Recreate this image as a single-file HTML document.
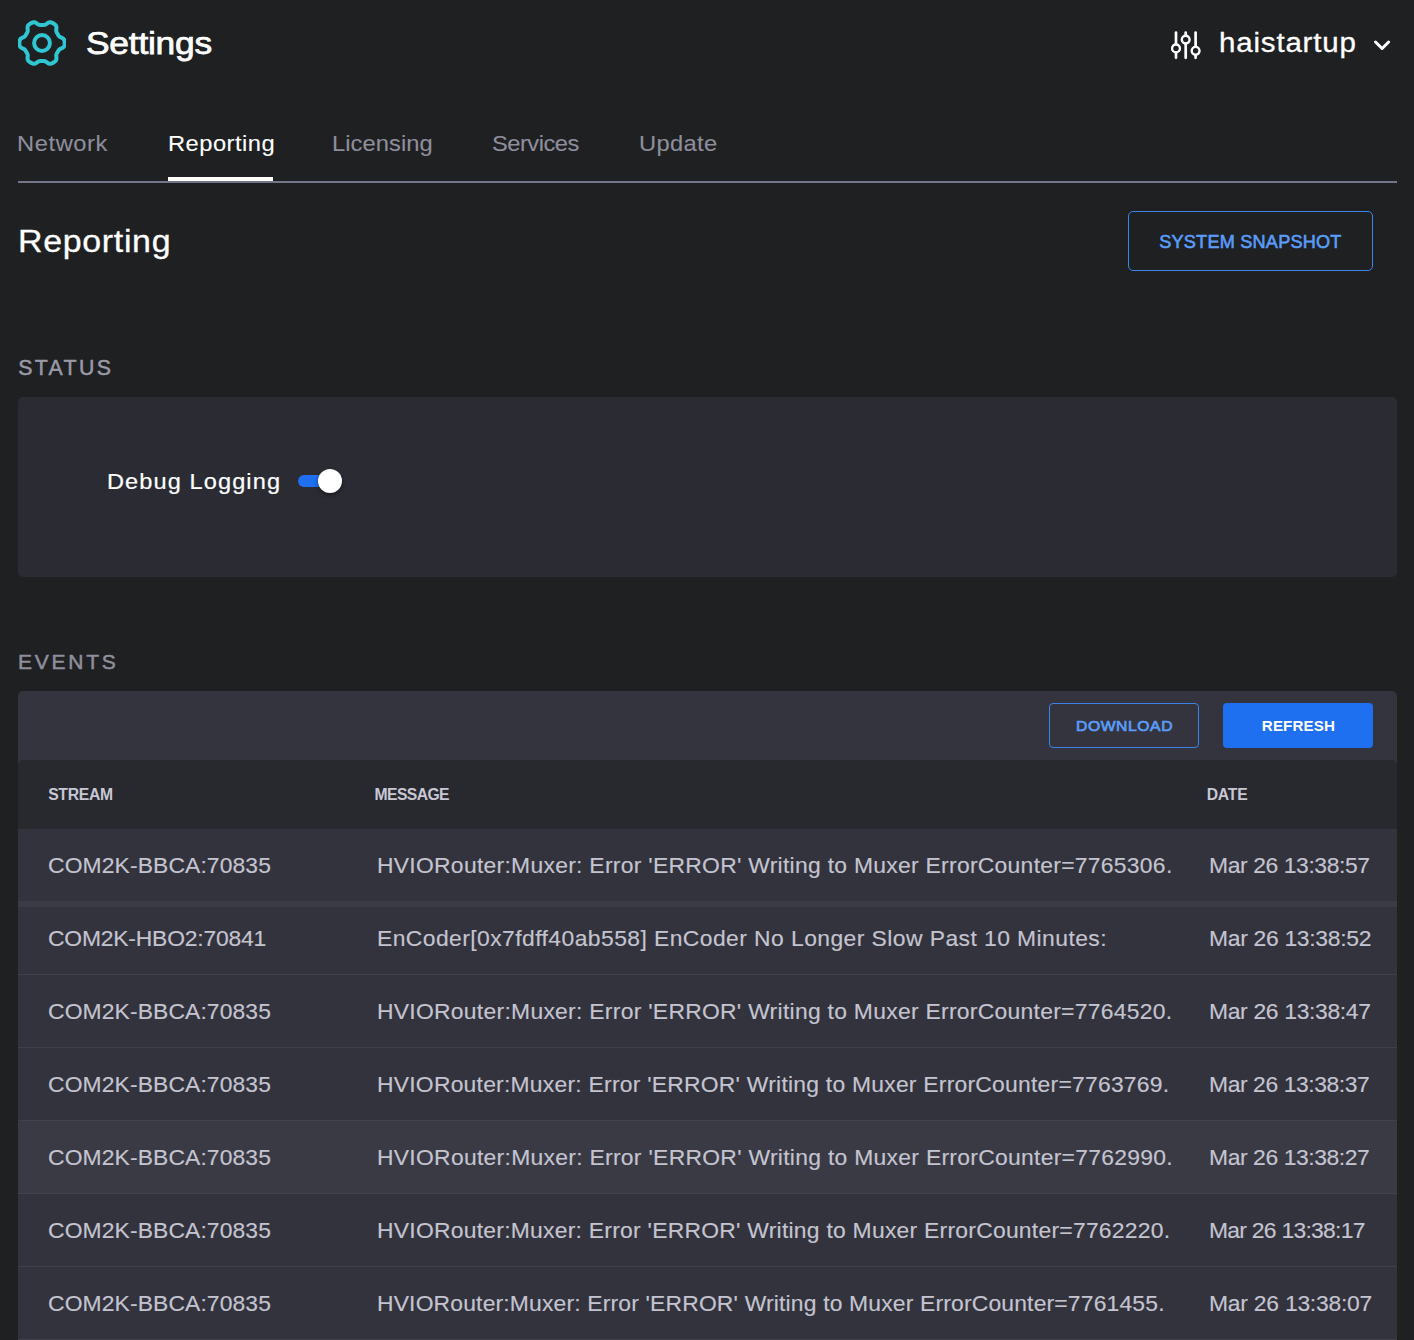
<!DOCTYPE html>
<html><head><meta charset="utf-8"><style>
html,body{margin:0;padding:0;}
body{width:1414px;height:1340px;overflow:hidden;background:#1f2022;position:relative;font-family:"Liberation Sans",sans-serif;}
.t{position:absolute;white-space:nowrap;line-height:1;transform-origin:0 0;}
.b{position:absolute;}
</style></head><body>
<svg class="b" style="left:18px;top:19px" width="48" height="48" viewBox="0 0 48 48"><path d="M46.65,24.00 L46.64,24.59 L46.59,25.18 L46.51,25.77 L46.39,26.35 L46.21,26.92 L45.95,27.48 L45.58,28.00 L45.06,28.48 L44.41,28.90 L43.66,29.27 L42.90,29.60 L42.23,29.92 L41.68,30.26 L41.25,30.62 L40.91,31.00 L40.61,31.40 L40.35,31.80 L40.11,32.21 L39.87,32.62 L39.63,33.02 L39.40,33.43 L39.16,33.85 L38.93,34.26 L38.71,34.69 L38.52,35.14 L38.36,35.63 L38.26,36.18 L38.24,36.82 L38.30,37.57 L38.39,38.39 L38.45,39.22 L38.41,40.00 L38.25,40.69 L37.98,41.27 L37.64,41.77 L37.23,42.21 L36.79,42.61 L36.32,42.97 L35.83,43.31 L35.33,43.62 L34.80,43.90 L34.27,44.16 L33.72,44.38 L33.16,44.57 L32.57,44.70 L31.96,44.75 L31.32,44.68 L30.65,44.48 L29.96,44.12 L29.27,43.66 L28.60,43.17 L27.98,42.75 L27.42,42.44 L26.89,42.25 L26.39,42.14 L25.90,42.09 L25.42,42.06 L24.95,42.05 L24.47,42.05 L24.00,42.05 L23.53,42.05 L23.05,42.05 L22.58,42.06 L22.10,42.09 L21.61,42.14 L21.11,42.25 L20.58,42.44 L20.02,42.75 L19.40,43.17 L18.73,43.66 L18.04,44.12 L17.35,44.48 L16.68,44.68 L16.04,44.75 L15.43,44.70 L14.84,44.57 L14.28,44.38 L13.73,44.16 L13.20,43.90 L12.68,43.62 L12.17,43.31 L11.68,42.97 L11.21,42.61 L10.77,42.21 L10.36,41.77 L10.02,41.27 L9.75,40.69 L9.59,40.00 L9.55,39.22 L9.61,38.39 L9.70,37.57 L9.76,36.82 L9.74,36.18 L9.64,35.63 L9.48,35.14 L9.29,34.69 L9.07,34.26 L8.84,33.85 L8.60,33.43 L8.37,33.02 L8.13,32.62 L7.89,32.21 L7.65,31.80 L7.39,31.40 L7.09,31.00 L6.75,30.62 L6.32,30.26 L5.77,29.92 L5.10,29.60 L4.34,29.27 L3.59,28.90 L2.94,28.48 L2.42,28.00 L2.05,27.48 L1.79,26.92 L1.61,26.35 L1.49,25.77 L1.41,25.18 L1.36,24.59 L1.35,24.00 L1.36,23.41 L1.41,22.82 L1.49,22.23 L1.61,21.65 L1.79,21.08 L2.05,20.52 L2.42,20.00 L2.94,19.52 L3.59,19.10 L4.34,18.73 L5.10,18.40 L5.77,18.08 L6.32,17.74 L6.75,17.38 L7.09,17.00 L7.39,16.60 L7.65,16.20 L7.89,15.79 L8.13,15.38 L8.37,14.98 L8.60,14.57 L8.84,14.15 L9.07,13.74 L9.29,13.31 L9.48,12.86 L9.64,12.37 L9.74,11.82 L9.76,11.18 L9.70,10.43 L9.61,9.61 L9.55,8.78 L9.59,8.00 L9.75,7.31 L10.02,6.73 L10.36,6.23 L10.77,5.79 L11.21,5.39 L11.68,5.03 L12.17,4.69 L12.67,4.38 L13.20,4.10 L13.73,3.84 L14.28,3.62 L14.84,3.43 L15.43,3.30 L16.04,3.25 L16.68,3.32 L17.35,3.52 L18.04,3.88 L18.73,4.34 L19.40,4.83 L20.02,5.25 L20.58,5.56 L21.11,5.75 L21.61,5.86 L22.10,5.91 L22.58,5.94 L23.05,5.95 L23.53,5.95 L24.00,5.95 L24.47,5.95 L24.95,5.95 L25.42,5.94 L25.90,5.91 L26.39,5.86 L26.89,5.75 L27.42,5.56 L27.98,5.25 L28.60,4.83 L29.27,4.34 L29.96,3.88 L30.65,3.52 L31.32,3.32 L31.96,3.25 L32.57,3.30 L33.16,3.43 L33.72,3.62 L34.27,3.84 L34.80,4.10 L35.33,4.38 L35.83,4.69 L36.32,5.03 L36.79,5.39 L37.23,5.79 L37.64,6.23 L37.98,6.73 L38.25,7.31 L38.41,8.00 L38.45,8.78 L38.39,9.61 L38.30,10.43 L38.24,11.18 L38.26,11.82 L38.36,12.37 L38.52,12.86 L38.71,13.31 L38.93,13.74 L39.16,14.15 L39.40,14.57 L39.63,14.98 L39.87,15.38 L40.11,15.79 L40.35,16.20 L40.61,16.60 L40.91,17.00 L41.25,17.38 L41.68,17.74 L42.23,18.08 L42.90,18.40 L43.66,18.73 L44.41,19.10 L45.06,19.52 L45.58,20.00 L45.95,20.52 L46.21,21.08 L46.39,21.65 L46.51,22.23 L46.59,22.82 L46.64,23.41 L46.65,24.00Z" fill="none" stroke="#30c6d2" stroke-width="4" stroke-linejoin="round"/><circle cx="24" cy="24" r="7.9" fill="none" stroke="#30c6d2" stroke-width="4"/></svg>
<svg class="b" style="left:1168px;top:29px" width="36" height="32" viewBox="0 0 36 32">
 <g stroke="#ffffff" stroke-width="2.7" fill="none" stroke-linecap="round">
  <line x1="8" y1="3.5" x2="8" y2="14.5"/><line x1="8" y1="24" x2="8" y2="28.8"/><circle cx="8" cy="19.4" r="3.9" stroke-width="2.4"/>
  <line x1="17.7" y1="3.5" x2="17.7" y2="6"/><line x1="17.7" y1="15" x2="17.7" y2="28.8"/><circle cx="17.7" cy="10.6" r="3.9" stroke-width="2.4"/>
  <line x1="27.6" y1="3.5" x2="27.6" y2="17"/><line x1="27.6" y1="26.5" x2="27.6" y2="28.8"/><circle cx="27.6" cy="21.8" r="3.9" stroke-width="2.4"/>
 </g></svg>
<svg class="b" style="left:1372px;top:38px" width="20" height="16" viewBox="0 0 20 16"><path d="M3.5,4 L10.1,10.5 L16.6,4" fill="none" stroke="#ffffff" stroke-width="3" stroke-linecap="round" stroke-linejoin="round"/></svg>
<div class="b" style="left:18px;top:181px;width:1379px;height:2px;background:#72748a"></div>
<div class="b" style="left:168px;top:177px;width:105px;height:4px;background:#ffffff"></div>
<div class="b" style="left:1128px;top:211px;width:245px;height:60px;box-sizing:border-box;border:1.5px solid #3c84ea;border-radius:5px"></div>
<div class="b" style="left:18px;top:397px;width:1379px;height:180px;background:#2b2b33;border-radius:5px"></div>
<div class="b" style="left:298px;top:475px;width:40px;height:12px;background:#1f6ff0;border-radius:6px"></div>
<div class="b" style="left:318px;top:469px;width:24px;height:24px;background:#ffffff;border-radius:50%;box-shadow:0 2px 4px rgba(0,0,0,0.45)"></div>
<div class="b" style="left:18px;top:691px;width:1379px;height:660px;background:#34343e;border-radius:5px 5px 0 0"></div>
<div class="b" style="left:1049px;top:703px;width:150px;height:45px;box-sizing:border-box;border:1.2px solid #3b82e8;border-radius:4px"></div>
<div class="b" style="left:1223px;top:703px;width:150px;height:45px;background:#1f70f0;border-radius:4px"></div>
<div class="b" style="left:18px;top:760px;width:1379px;height:69px;background:#28282f;border-radius:5px 5px 0 0"></div>
<div class="b" style="left:18px;top:829px;width:1379px;height:511px;background:#33333d"></div>
<div class="b" style="left:18px;top:901px;width:1379px;height:6px;background:#3b3b46"></div>
<div class="b" style="left:18px;top:974px;width:1379px;height:1px;background:#3f3f4a"></div>
<div class="b" style="left:18px;top:1047px;width:1379px;height:1px;background:#3f3f4a"></div>
<div class="b" style="left:18px;top:1120px;width:1379px;height:73px;background:#3a3a45"></div>
<div class="b" style="left:18px;top:1120px;width:1379px;height:1px;background:#42424d"></div>
<div class="b" style="left:18px;top:1193px;width:1379px;height:1px;background:#42424d"></div>
<div class="b" style="left:18px;top:1266px;width:1379px;height:1px;background:#3f3f4a"></div>
<div class="b" style="left:18px;top:1339px;width:1379px;height:1px;background:#3f3f4a"></div>
<div class="t" style="left:85.71px;top:27.00px;font-size:32.21px;letter-spacing:-0.240px;transform:scaleX(1.100);font-weight:normal;color:#ffffff;-webkit-text-stroke:0.75px #ffffff;">Settings</div>
<div class="t" style="left:1219.12px;top:30.00px;font-size:26.80px;letter-spacing:0.752px;transform:scaleX(1.100);font-weight:normal;color:#ffffff;-webkit-text-stroke:0.3px #ffffff;">haistartup</div>
<div class="t" style="left:17.10px;top:133.00px;font-size:21.57px;letter-spacing:0.523px;transform:scaleX(1.100);font-weight:normal;color:#8e8e9c;-webkit-text-stroke:0.1px #8e8e9c;">Network</div>
<div class="t" style="left:167.60px;top:133.00px;font-size:21.57px;letter-spacing:0.431px;transform:scaleX(1.100);font-weight:normal;color:#ffffff;-webkit-text-stroke:0.1px #ffffff;">Reporting</div>
<div class="t" style="left:332.10px;top:133.00px;font-size:21.57px;letter-spacing:0.059px;transform:scaleX(1.100);font-weight:normal;color:#8e8e9c;-webkit-text-stroke:0.1px #8e8e9c;">Licensing</div>
<div class="t" style="left:492.31px;top:133.00px;font-size:21.57px;letter-spacing:-0.469px;transform:scaleX(1.100);font-weight:normal;color:#8e8e9c;-webkit-text-stroke:0.1px #8e8e9c;">Services</div>
<div class="t" style="left:638.97px;top:133.00px;font-size:21.57px;letter-spacing:0.313px;transform:scaleX(1.100);font-weight:normal;color:#8e8e9c;-webkit-text-stroke:0.1px #8e8e9c;">Update</div>
<div class="t" style="left:18.31px;top:227.00px;font-size:30.86px;letter-spacing:0.608px;transform:scaleX(1.100);font-weight:normal;color:#ffffff;-webkit-text-stroke:0.3px #ffffff;">Reporting</div>
<div class="t" style="left:1159.23px;top:233.00px;font-size:18.14px;letter-spacing:0.209px;font-weight:normal;color:#5a9cf8;-webkit-text-stroke:0.6px #5a9cf8;">SYSTEM SNAPSHOT</div>
<div class="t" style="left:18.28px;top:358.00px;font-size:21.29px;letter-spacing:2.370px;font-weight:normal;color:#9a9aa6;-webkit-text-stroke:0.5px #9a9aa6;">STATUS</div>
<div class="t" style="left:107.47px;top:472.00px;font-size:21.43px;letter-spacing:0.996px;transform:scaleX(1.100);font-weight:normal;color:#ffffff;-webkit-text-stroke:0.2px #ffffff;">Debug Logging</div>
<div class="t" style="left:18.11px;top:651.00px;font-size:21.00px;letter-spacing:2.720px;font-weight:normal;color:#8f8f9c;-webkit-text-stroke:0.5px #8f8f9c;">EVENTS</div>
<div class="t" style="left:1075.86px;top:719.00px;font-size:14.29px;letter-spacing:0.514px;transform:scaleX(1.100);font-weight:normal;color:#5a9cf8;-webkit-text-stroke:0.7px #5a9cf8;">DOWNLOAD</div>
<div class="t" style="left:1261.85px;top:718.00px;font-size:15.14px;letter-spacing:0.131px;font-weight:bold;color:#ffffff;">REFRESH</div>
<div class="t" style="left:48.15px;top:787.00px;font-size:15.71px;letter-spacing:-0.258px;font-weight:bold;color:#c8c8d4;">STREAM</div>
<div class="t" style="left:374.62px;top:787.00px;font-size:15.71px;letter-spacing:-0.615px;font-weight:bold;color:#c8c8d4;">MESSAGE</div>
<div class="t" style="left:1206.72px;top:787.00px;font-size:15.71px;letter-spacing:-0.205px;font-weight:bold;color:#c8c8d4;">DATE</div>
<div class="t" style="left:47.80px;top:855.00px;font-size:22.21px;letter-spacing:0.114px;transform:scaleX(1.030);font-weight:normal;color:#c4c4d0;-webkit-text-stroke:0.15px #c4c4d0;">COM2K-BBCA:70835</div>
<div class="t" style="left:377.49px;top:855.00px;font-size:22.21px;letter-spacing:0.280px;transform:scaleX(1.030);font-weight:normal;color:#c4c4d0;-webkit-text-stroke:0.15px #c4c4d0;">HVIORouter:Muxer: Error 'ERROR' Writing to Muxer ErrorCounter=7765306.</div>
<div class="t" style="left:1208.99px;top:855.00px;font-size:22.21px;letter-spacing:-0.387px;transform:scaleX(1.030);font-weight:normal;color:#c4c4d0;-webkit-text-stroke:0.15px #c4c4d0;">Mar 26 13:38:57</div>
<div class="t" style="left:47.80px;top:928.00px;font-size:22.21px;letter-spacing:-0.190px;transform:scaleX(1.030);font-weight:normal;color:#c4c4d0;-webkit-text-stroke:0.15px #c4c4d0;">COM2K-HBO2:70841</div>
<div class="t" style="left:377.49px;top:928.00px;font-size:22.21px;letter-spacing:0.422px;transform:scaleX(1.030);font-weight:normal;color:#c4c4d0;-webkit-text-stroke:0.15px #c4c4d0;">EnCoder[0x7fdff40ab558] EnCoder No Longer Slow Past 10 Minutes:</div>
<div class="t" style="left:1208.99px;top:928.00px;font-size:22.21px;letter-spacing:-0.289px;transform:scaleX(1.030);font-weight:normal;color:#c4c4d0;-webkit-text-stroke:0.15px #c4c4d0;">Mar 26 13:38:52</div>
<div class="t" style="left:47.80px;top:1001.00px;font-size:22.21px;letter-spacing:0.114px;transform:scaleX(1.030);font-weight:normal;color:#c4c4d0;-webkit-text-stroke:0.15px #c4c4d0;">COM2K-BBCA:70835</div>
<div class="t" style="left:377.49px;top:1001.00px;font-size:22.21px;letter-spacing:0.278px;transform:scaleX(1.030);font-weight:normal;color:#c4c4d0;-webkit-text-stroke:0.15px #c4c4d0;">HVIORouter:Muxer: Error 'ERROR' Writing to Muxer ErrorCounter=7764520.</div>
<div class="t" style="left:1208.99px;top:1001.00px;font-size:22.21px;letter-spacing:-0.317px;transform:scaleX(1.030);font-weight:normal;color:#c4c4d0;-webkit-text-stroke:0.15px #c4c4d0;">Mar 26 13:38:47</div>
<div class="t" style="left:47.80px;top:1074.00px;font-size:22.21px;letter-spacing:0.114px;transform:scaleX(1.030);font-weight:normal;color:#c4c4d0;-webkit-text-stroke:0.15px #c4c4d0;">COM2K-BBCA:70835</div>
<div class="t" style="left:377.49px;top:1074.00px;font-size:22.21px;letter-spacing:0.236px;transform:scaleX(1.030);font-weight:normal;color:#c4c4d0;-webkit-text-stroke:0.15px #c4c4d0;">HVIORouter:Muxer: Error 'ERROR' Writing to Muxer ErrorCounter=7763769.</div>
<div class="t" style="left:1208.99px;top:1074.00px;font-size:22.21px;letter-spacing:-0.400px;transform:scaleX(1.030);font-weight:normal;color:#c4c4d0;-webkit-text-stroke:0.15px #c4c4d0;">Mar 26 13:38:37</div>
<div class="t" style="left:47.80px;top:1147.00px;font-size:22.21px;letter-spacing:0.114px;transform:scaleX(1.030);font-weight:normal;color:#c4c4d0;-webkit-text-stroke:0.15px #c4c4d0;">COM2K-BBCA:70835</div>
<div class="t" style="left:377.49px;top:1147.00px;font-size:22.21px;letter-spacing:0.287px;transform:scaleX(1.030);font-weight:normal;color:#c4c4d0;-webkit-text-stroke:0.15px #c4c4d0;">HVIORouter:Muxer: Error 'ERROR' Writing to Muxer ErrorCounter=7762990.</div>
<div class="t" style="left:1208.99px;top:1147.00px;font-size:22.21px;letter-spacing:-0.400px;transform:scaleX(1.030);font-weight:normal;color:#c4c4d0;-webkit-text-stroke:0.15px #c4c4d0;">Mar 26 13:38:27</div>
<div class="t" style="left:47.80px;top:1220.00px;font-size:22.21px;letter-spacing:0.114px;transform:scaleX(1.030);font-weight:normal;color:#c4c4d0;-webkit-text-stroke:0.15px #c4c4d0;">COM2K-BBCA:70835</div>
<div class="t" style="left:377.49px;top:1220.00px;font-size:22.21px;letter-spacing:0.250px;transform:scaleX(1.030);font-weight:normal;color:#c4c4d0;-webkit-text-stroke:0.15px #c4c4d0;">HVIORouter:Muxer: Error 'ERROR' Writing to Muxer ErrorCounter=7762220.</div>
<div class="t" style="left:1208.99px;top:1220.00px;font-size:22.21px;letter-spacing:-0.699px;transform:scaleX(1.030);font-weight:normal;color:#c4c4d0;-webkit-text-stroke:0.15px #c4c4d0;">Mar 26 13:38:17</div>
<div class="t" style="left:47.80px;top:1293.00px;font-size:22.21px;letter-spacing:0.114px;transform:scaleX(1.030);font-weight:normal;color:#c4c4d0;-webkit-text-stroke:0.15px #c4c4d0;">COM2K-BBCA:70835</div>
<div class="t" style="left:377.49px;top:1293.00px;font-size:22.21px;letter-spacing:0.171px;transform:scaleX(1.030);font-weight:normal;color:#c4c4d0;-webkit-text-stroke:0.15px #c4c4d0;">HVIORouter:Muxer: Error 'ERROR' Writing to Muxer ErrorCounter=7761455.</div>
<div class="t" style="left:1208.99px;top:1293.00px;font-size:22.21px;letter-spacing:-0.227px;transform:scaleX(1.030);font-weight:normal;color:#c4c4d0;-webkit-text-stroke:0.15px #c4c4d0;">Mar 26 13:38:07</div>
</body></html>
